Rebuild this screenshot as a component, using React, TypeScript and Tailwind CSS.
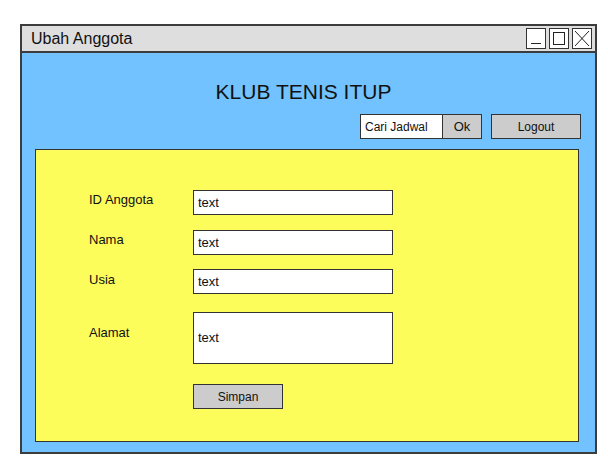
export default function App() {
  const rows: { label: string; h: string; gap: string; lt: string }[] = [
    { label: 'ID Anggota', h: 'h-[25px]', gap: 'mb-[15px]', lt: 'pt-[2px]' },
    { label: 'Nama', h: 'h-[25px]', gap: 'mb-[14px]', lt: 'pt-[2px]' },
    { label: 'Usia', h: 'h-[25px]', gap: 'mb-[18px]', lt: 'pt-[3px]' },
    { label: 'Alamat', h: 'h-[52px]', gap: 'mb-[20px]', lt: 'pt-[13px]' },
  ];

  return (
    <div className="min-h-screen bg-white pl-[20px] pt-[24px] font-['Liberation_Sans',sans-serif] text-[#111]">
      <div className="flex h-[430px] w-[577px] flex-col border-2 border-[#3c3c3c] bg-[#71c2fe]">
        {/* title bar */}
        <div className="flex h-[27px] items-center justify-between border-b-2 border-[#3c3c3c] bg-[#dedede] pl-[9px] pr-[3px]">
          <span className="text-[16px] leading-none">Ubah Anggota</span>
          <div className="flex gap-[3px]">
            <div className="flex h-[21px] w-[20px] items-end justify-center border border-[#333] bg-white pb-[4px]">
              <div className="h-[1px] w-[10px] bg-[#222]" />
            </div>
            <div className="flex h-[21px] w-[20px] items-center justify-center border border-[#333] bg-white">
              <div className="h-[13px] w-[12px] border border-[#222]" />
            </div>
            <div className="flex h-[21px] w-[20px] items-center justify-center border border-[#333] bg-white">
              <svg width="16" height="17" viewBox="0 0 16 17" fill="none" stroke="#222" strokeWidth="1">
                <path d="M1 1 L15 16 M15 1 L1 16" />
              </svg>
            </div>
          </div>
        </div>

        {/* header */}
        <div className="mt-[25px] h-[28px] pr-[10px] text-center text-[21px] leading-[28px]">KLUB TENIS ITUP</div>
        <div className="mt-[8px] flex justify-end pr-[14px]">
          <div className="flex h-[25px] w-[83px] items-center border border-[#333] bg-white pl-[4px] text-[12px]">
            Cari Jadwal
          </div>
          <div className="flex h-[25px] w-[39px] items-center justify-center border border-l-0 border-[#333] bg-[#cccccc] text-[13px]">
            Ok
          </div>
          <div className="ml-[9px] flex h-[25px] w-[90px] items-center justify-center border border-[#333] bg-[#cccccc] text-[12px]">
            Logout
          </div>
        </div>

        {/* form panel */}
        <div className="mb-[10px] ml-[13px] mr-[16px] mt-[10px] flex-1 border border-[#333] bg-[#fcfc5a] pl-[53px] pt-[40px]">
          {rows.map((r) => (
            <div key={r.label} className={`flex ${r.gap}`}>
              <div className={`w-[104px] text-[13px] leading-[16px] ${r.lt}`}>{r.label}</div>
              <div
                className={`flex w-[200px] items-center border border-[#333] bg-white pl-[4px] text-[13px] ${r.h}`}
              >
                text
              </div>
            </div>
          ))}
          <div className="flex">
            <div className="w-[104px]" />
            <div className="flex h-[25px] w-[90px] items-center justify-center border border-[#333] bg-[#cccccc] text-[12px]">
              Simpan
            </div>
          </div>
        </div>
      </div>
    </div>
  );
}
